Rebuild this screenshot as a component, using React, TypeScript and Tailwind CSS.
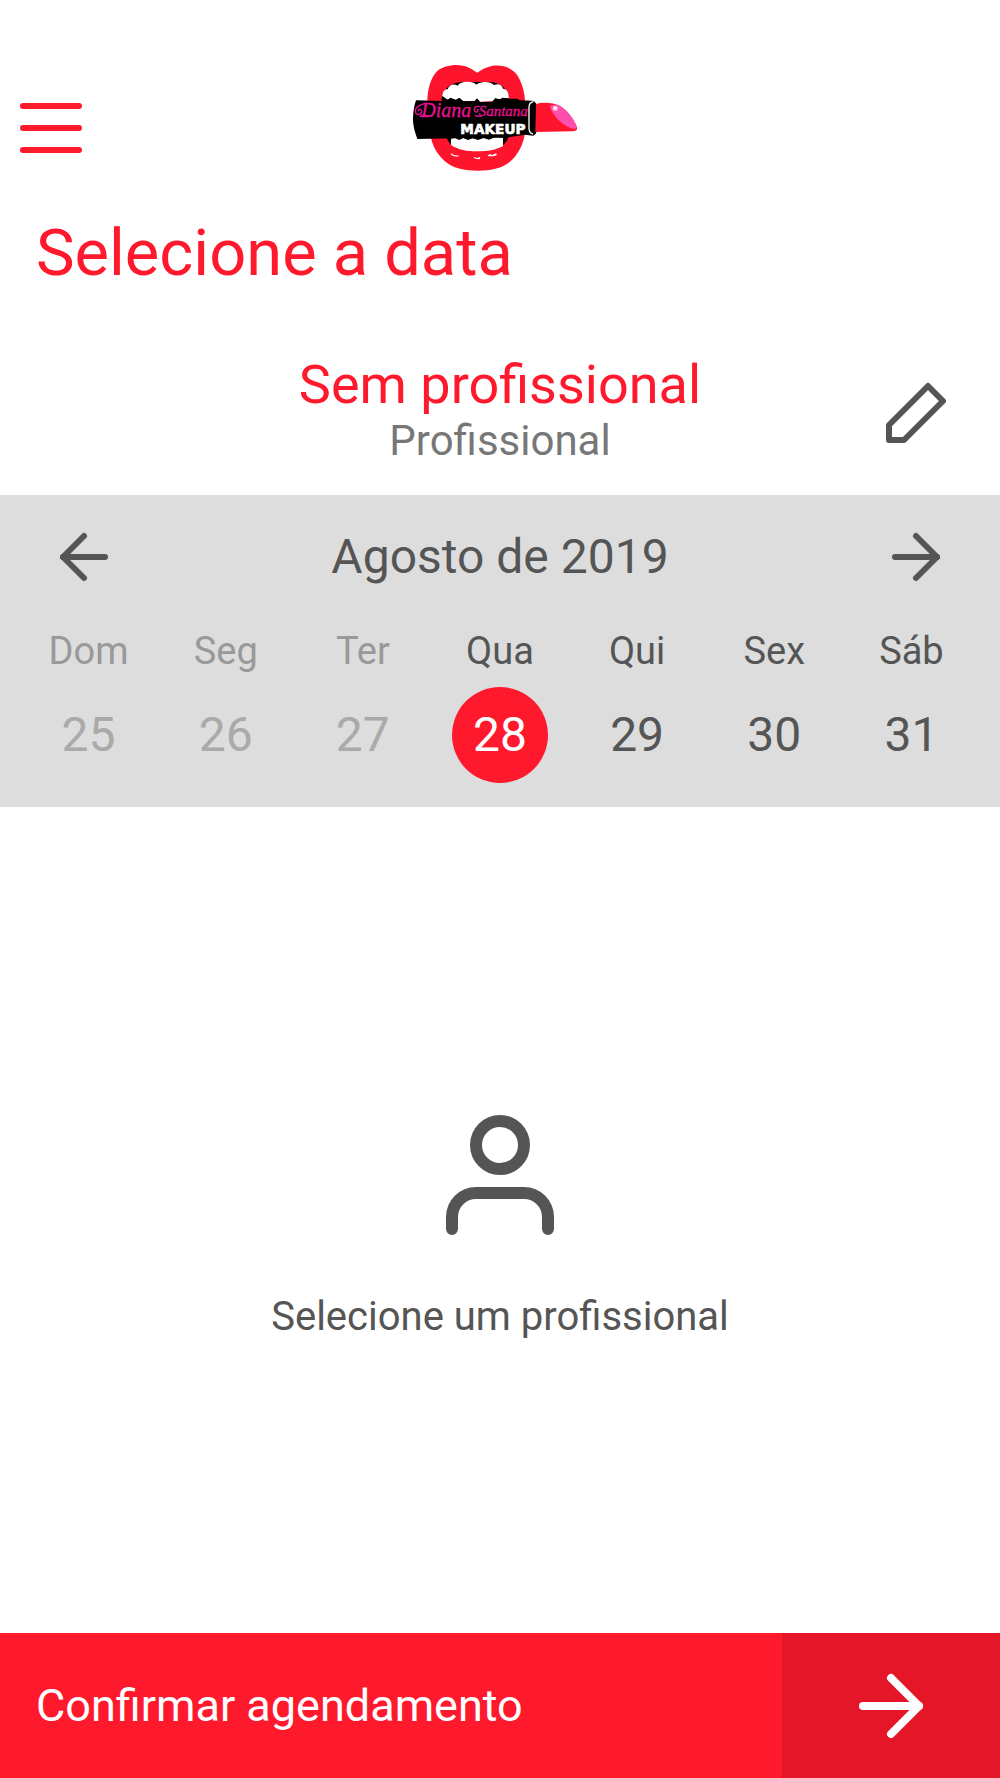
import { useState, type ReactNode } from 'react';
import { ArrowLeft, ArrowRight } from 'lucide-react';

const days = [
  { week: 'Dom', date: 25, past: true },
  { week: 'Seg', date: 26, past: true },
  { week: 'Ter', date: 27, past: true },
  { week: 'Qua', date: 28, past: false },
  { week: 'Qui', date: 29, past: false },
  { week: 'Sex', date: 30, past: false },
  { week: 'Sáb', date: 31, past: false },
];

/* ------------------------------------------------------------------ */
/*  Drawings                                                           */
/* ------------------------------------------------------------------ */

function StrokeIcon({ className, children }: { className: string; children: ReactNode }) {
  return (
    <svg
      viewBox="0 0 24 24"
      fill="none"
      stroke="currentColor"
      strokeWidth="2"
      strokeLinecap="round"
      strokeLinejoin="round"
      className={className}
      aria-hidden
    >
      {children}
    </svg>
  );
}

function MenuIcon() {
  return (
    <svg
      viewBox="0 0 62 50"
      stroke="currentColor"
      strokeWidth="6"
      strokeLinecap="round"
      className="h-[50px] w-[62px]"
      aria-hidden
    >
      <path d="M3 3H59M3 25H59M3 47H59" />
    </svg>
  );
}

/** Lips biting a lipstick, with the salon's name on the tube. */
function Logo() {
  return (
    <svg viewBox="30 30 540 339" className="h-[113px] w-[180px]" role="img" aria-label="Diana Santana Makeup">
      <path
        d="M82 152C83 118 91 84 112 63C133 45 178 39 207 53C218 58 226 64 232 68C243 60 257 52 275 48C310 42 343 55 358 86C369 108 374 130 375 152V250C370 283 354 316 329 336C304 356 270 362 235 362C193 362 157 354 133 332C108 309 96 283 91 254Z"
        fill="#ff142d"
      />
      <path d="M124 152C129 115 151 99 186 96H270C302 98 325 116 328 152Z" fill="#000" />
      <path
        d="M127 138C128 125 134 117 143 118C147 105 160 100 173 107C181 94 217 91 229 104C242 92 272 94 282 105C296 99 307 106 309 116C321 117 326 127 327 145L306 143L300 149L286 144L278 154L240 155L231 145L224 153L188 153L178 143L168 149L151 143L143 149Z"
        fill="#fff"
      />
      <path d="M138 258H326C324 270 316 280 306 288L289 297L175 297L153 284C146 277 141 268 138 258Z" fill="#000" />
      <path
        d="M153 266L166 263L178 268L190 263L205 268L220 264L235 268L252 263L268 267L283 262L309 264V288C287 300 263 304 233 304C202 304 174 300 153 285Z"
        fill="#fff"
      />
      <path
        d="M48 151L128 153L151 146L164 152L178 145L190 153L224 154L231 147L240 156L276 155L286 147L352 146L360 151L397 152C406 154 410 162 411 170V237C410 249 406 256 399 257L375 254L326 262L280 263L268 269L250 264L234 270L218 265L204 270L190 264L178 270L166 265L52 267C43 242 38 222 39 203C40 181 43 165 48 151Z"
        fill="#000"
      />
      <path d="M400 155C391 157 387 163 387 172V235C387 245 391 250 399 252" fill="none" stroke="#fff" strokeWidth="4" />
      <path d="M408 162Q424 157 447 159C480 160 501 181 516 204C528 222 534 234 530 240Q527 244 516 244L406 246Z" fill="#ff142d" />
      <path d="M452 166C475 157 502 182 517 204C526 218 533 232 527 236C513 240 480 219 465 198C455 185 449 175 452 166Z" fill="#ff4fae" />
      <circle cx="466" cy="175" r="8" fill="#ffb5df" />
      <circle cx="465" cy="174" r="4" fill="#fff" />
      <path
        d="M152 309L162 315L176 317L175 320L162 319L154 315ZM220 320L230 324L241 321L239 328L231 327L223 325ZM263 316L272 312L276 316L289 309L290 316L279 319L265 319Z"
        fill="#fff"
      />
      <g fill="#e5108f" fontFamily="'Liberation Serif', serif" fontStyle="italic">
        <text x="64" y="201" fontSize="60" stroke="#e5108f">
          Diana
        </text>
        <text x="236" y="199" fontSize="45" stroke="#e5108f">
          Santana
        </text>
      </g>
      <path
        d="M96 163C68 156 45 169 46 184C47 197 65 196 65 184C65 176 55 176 54 183M60 199C74 190 84 202 98 197M238 170C222 165 218 183 228 186C235 187 237 180 232 178M226 196C234 201 240 200 246 197"
        fill="none"
        stroke="#e5108f"
        strokeWidth="4"
        strokeLinecap="round"
      />
      <text
        x="181"
        y="253"
        fontSize="41"
        fontFamily="'DejaVu Sans', sans-serif"
        fontWeight="700"
        fill="#fff"
        stroke="#fff"
        strokeWidth="2"
        strokeLinejoin="round"
      >
        MAKEUP
      </text>
    </svg>
  );
}

/* ------------------------------------------------------------------ */
/*  Sections                                                           */
/* ------------------------------------------------------------------ */

function Header() {
  return (
    <header className="grid grid-cols-[1fr_auto_1fr] items-end px-5 pt-[60px]">
      <button type="button" aria-label="Menu" className="justify-self-start pb-5 text-[#ff192d]">
        <MenuIcon />
      </button>
      <Logo />
    </header>
  );
}

function Professional() {
  return (
    <section className="mt-[68px] grid grid-cols-[72px_1fr_72px] items-center px-12 pb-[26px]">
      <div className="col-start-2 text-center">
        <h2 className="text-[54px] leading-14 text-[#ff192d]">Sem profissional</h2>
        <p className="text-[42px] leading-14 text-[#777]">Profissional</p>
      </div>
      <button type="button" aria-label="Editar profissional">
        <StrokeIcon className="size-18">
          <path d="M16 3L21 8L8 21H3V16Z" />
        </StrokeIcon>
      </button>
    </section>
  );
}

function WeekPicker() {
  const [selected, setSelected] = useState(28);

  return (
    <section className="bg-[#ddd] pt-[26px] pb-6">
      <div className="flex items-center justify-between px-12">
        <button type="button" aria-label="Semana anterior">
          <ArrowLeft className="size-18" />
        </button>
        <h2 className="text-[48px] leading-14">Agosto de 2019</h2>
        <button type="button" aria-label="Próxima semana">
          <ArrowRight className="size-18" />
        </button>
      </div>

      <div className="mt-[34px] grid grid-cols-7 px-5">
        {days.map(({ week, date, past }) => (
          <button
            key={date}
            type="button"
            disabled={past}
            aria-pressed={selected === date}
            onClick={() => setSelected(date)}
            className="flex flex-col items-center gap-3"
          >
            <span className={past ? 'text-[38px] leading-12 text-[#999]' : 'text-[38px] leading-12'}>{week}</span>
            <span
              className={
                selected === date
                  ? 'flex size-24 items-center justify-center rounded-full bg-[#ff192d] text-[48px] text-white'
                  : past
                    ? 'flex size-24 items-center justify-center text-[48px] text-[#aaa]'
                    : 'flex size-24 items-center justify-center text-[48px]'
              }
            >
              {date}
            </span>
          </button>
        ))}
      </div>
    </section>
  );
}

function EmptyState() {
  return (
    <main className="flex flex-1 flex-col items-center justify-center gap-[46px] pt-1">
      <StrokeIcon className="size-36">
        <path d="M20 21v-2a4 4 0 0 0-4-4H8a4 4 0 0 0-4 4v2" />
        <circle cx="12" cy="7" r="4" />
      </StrokeIcon>
      <p className="text-[40px] leading-12">Selecione um profissional</p>
    </main>
  );
}

export default function App() {
  return (
    <div className="flex min-h-screen flex-col bg-white font-[Roboto,sans-serif] text-[#555]">
      <Header />
      <h1 className="mt-11 px-9 text-[65px] leading-18 text-[#ff192d]">Selecione a data</h1>
      <Professional />
      <WeekPicker />
      <EmptyState />
      <button type="button" className="flex h-[145px] items-stretch bg-[#ff192d] text-left text-white">
        <span className="flex flex-1 items-center px-9 text-[45px]">Confirmar agendamento</span>
        <span className="flex w-[218px] items-center justify-center bg-[#e41628]">
          <ArrowRight className="size-24" />
        </span>
      </button>
    </div>
  );
}
